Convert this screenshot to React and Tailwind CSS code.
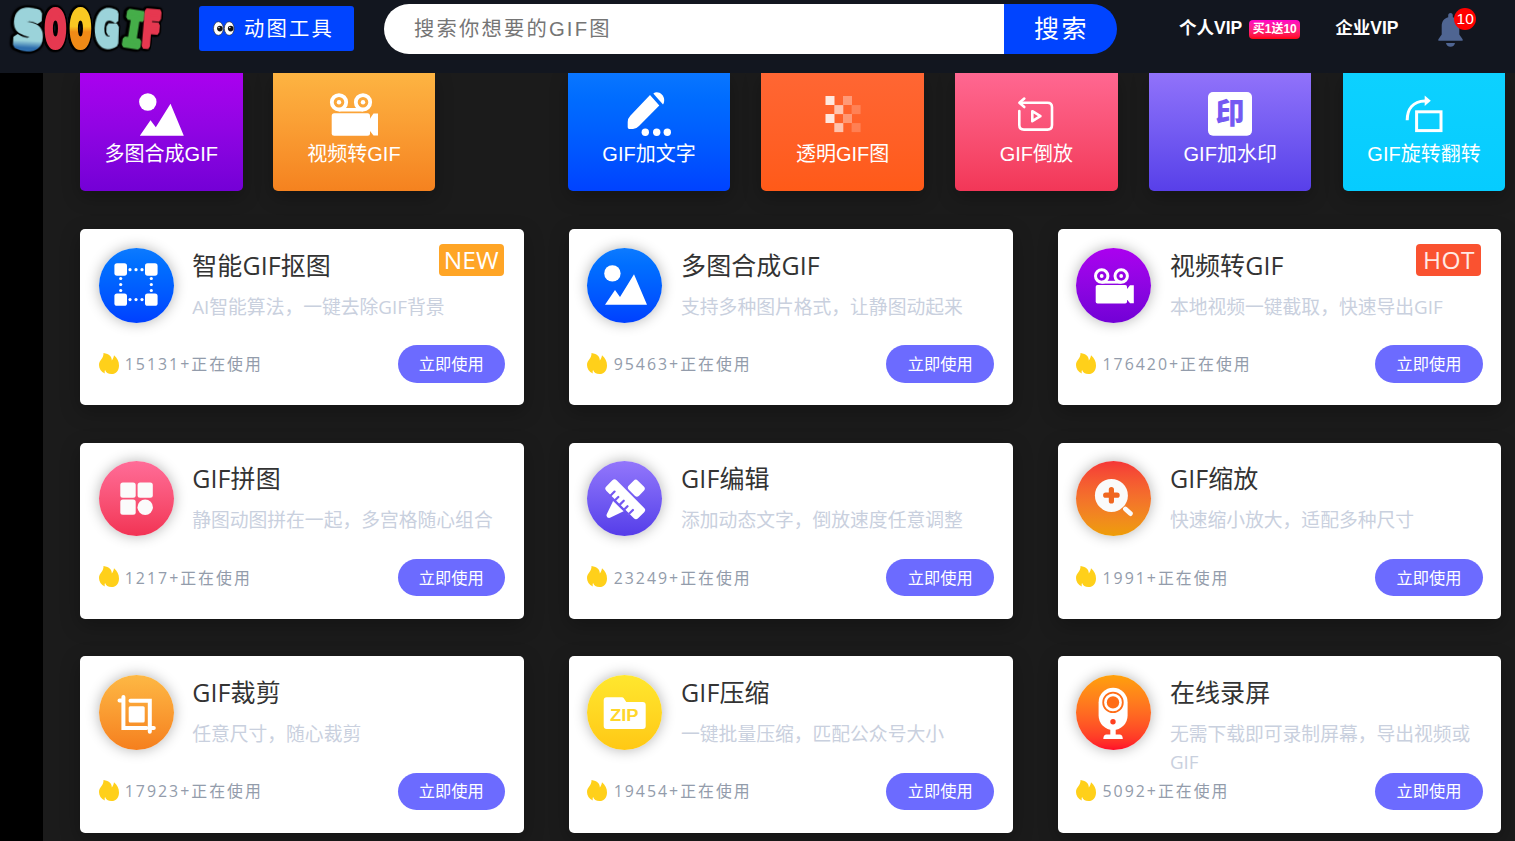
import { useState } from "react";

/* ---------- header pieces ---------- */

function Logo() {
  const common = {
    fontSize: 40,
    strokeWidth: 4.5,
    strokeLinejoin: "bevel",
    fontWeight: 700,
    textAnchor: "middle",
    fontFamily: '"DejaVu Sans", sans-serif',
    className: "drop-shadow-[0_0_1px_#000]",
  };
  return (
    <svg
      width="156"
      height="60"
      viewBox="0 0 156 60"
      className="shrink-0 overflow-visible [filter:drop-shadow(1.5px_0_0_#000)_drop-shadow(-1.5px_0_0_#000)_drop-shadow(0_1.5px_0_#000)_drop-shadow(0_-1px_0_#000)]"
    >
      <defs>
        <linearGradient id="ice" x1="0" y1="0" x2="0" y2="1">
          <stop offset="0.68" stopColor="#9bd3da" />
          <stop offset="0.8" stopColor="#2f6fae" />
        </linearGradient>
        <linearGradient id="sun" x1="0" y1="0" x2="0" y2="1">
          <stop offset="0.45" stopColor="#f9c822" />
          <stop offset="0.55" stopColor="#f08a16" />
        </linearGradient>
      </defs>
      <text {...common} transform="translate(17.5 47.5) rotate(3) scale(1.04 1.25)" fill="url(#ice)" stroke="url(#ice)" strokeWidth="5.5">S</text>
      <text {...common} transform="translate(45.5 45.5) scale(.6 1.18)" fill="#e63850" stroke="#e63850" strokeWidth="6">O</text>
      <text {...common} transform="translate(70.5 45.5) scale(.6 1.18)" fill="url(#sun)" stroke="url(#sun)" strokeWidth="6">O</text>
      <text {...common} transform="translate(96.5 45.5) rotate(2) scale(.72 1.16)" fill="#9bd3da" stroke="#9bd3da" strokeWidth="5.5">G</text>
      <text {...common} transform="translate(121 46) rotate(9) scale(.86 1.16)" fill="#45ad49" stroke="#45ad49" fontFamily='"DejaVu Sans Mono", monospace'>I</text>
      <text {...common} transform="translate(140 46.5) rotate(5) scale(.68 1.18)" fill="#e63850" stroke="#e63850">F</text>
    </svg>
  );
}

function Eyes() {
  return (
    <svg width="22" height="15" viewBox="0 0 22 15">
      <ellipse cx="5.4" cy="7.5" rx="4.9" ry="6.8" fill="#fff" stroke="#333" strokeWidth=".7" />
      <ellipse cx="16.2" cy="7.5" rx="4.9" ry="6.8" fill="#fff" stroke="#333" strokeWidth=".7" />
      <circle cx="6.9" cy="7.6" r="2.8" fill="#111" />
      <circle cx="17.7" cy="7.6" r="2.8" fill="#111" />
      <circle cx="6" cy="6.5" r=".7" fill="#fff" />
      <circle cx="16.8" cy="6.5" r=".7" fill="#fff" />
    </svg>
  );
}

function Bell() {
  return (
    <svg width="25" height="34" viewBox="0 0 25 34" fill="#4f6592">
      <path d="M12.5 0C14 0 14.8 1 14.8 2.3V4.2C18.9 5.2 21.3 8.6 21.3 13V21.5L24.6 26.2C25 27.2 24.6 27.7 23.8 27.7H1.2C.4 27.7 0 27.2.4 26.2L3.7 21.5V13C3.7 8.6 6.1 5.2 10.2 4.2V2.3C10.2 1 11 0 12.5 0Z" />
      <path d="M8 30H17C16.7 32.3 15 33.8 12.5 33.8S8.3 32.3 8 30Z" />
    </svg>
  );
}

/* ---------- tile icons, 60 x 48 ---------- */

const tileIcons = {
  picture: (
    <g fill="#fff">
      <circle cx="16.8" cy="12" r="8.7" />
      <path d="M8.8 45.7L19.5 30.3L24.8 37.3L39.5 13.7L52.8 45.7Z" />
    </g>
  ),
  camera: (
    <g fill="#fff">
      <circle cx="15" cy="12.3" r="7.2" fill="none" stroke="#fff" strokeWidth="3.8" />
      <circle cx="39" cy="12.3" r="7.2" fill="none" stroke="#fff" strokeWidth="3.8" />
      <circle cx="15" cy="12.3" r="2.2" />
      <circle cx="39" cy="12.3" r="2.2" />
      <rect x="15" y="18" width="24" height="3.5" />
      <rect x="7.7" y="23.3" width="38.3" height="22.4" rx="2.5" />
      <path d="M46 28.5L49.5 23.5H54V45.5H49.5L46 41Z" />
    </g>
  ),
  pencil: (
    <g fill="#fff">
      <path d="M31 5L40.3 15.5L20 36Q17.5 38.8 14 39H10.2Q8.7 39 8.7 37.3V32Q8.7 28.5 11.3 25.8Z" />
      <path d="M34.3 3.5C38.5.2 45 4 45.2 10C45.2 12 44.9 13 44 14.6Z" />
      <circle cx="26.3" cy="42.3" r="3.7" />
      <circle cx="37.7" cy="42.3" r="3.7" />
      <circle cx="48.3" cy="42.3" r="3.7" />
    </g>
  ),
  pixels: (
    <g fill="#fff">
      {[6, 24].map((y) => (
        <g key={y}>
          <rect x="12.5" y={y} width="9" height="9" opacity=".85" />
          <rect x="21.3" y={y + 9.1} width="9" height="9" opacity=".62" />
          <rect x="30" y={y} width="9" height="9" opacity=".35" />
          <rect x="38.6" y={y + 9.1} width="9" height="9" opacity=".2" />
        </g>
      ))}
    </g>
  ),
  reverse: (
    <g fill="none" stroke="#fff" strokeWidth="2.6" strokeLinecap="round" strokeLinejoin="round">
      <path d="M14.3 12.8H41.5Q46 12.8 46 17.3V35Q46 39.6 41.5 39.6H18Q13.3 39.6 13.3 35V21" />
      <path d="M18.3 8.6L13.4 12.8L18.3 17" />
      <path d="M26.3 21.2L34.4 26.2L26.3 31.2Z" />
    </g>
  ),
  stamp: (
    <g>
      <rect x="8" y="2" width="44" height="43.8" rx="5" fill="#fff" />
      <text x="30" y="34" textAnchor="middle" fontSize="29" fontWeight="900" fill="#7459f2" fontFamily='"Noto Sans CJK SC", sans-serif'>印</text>
    </g>
  ),
  rotate: (
    <g fill="none" stroke="#fff" strokeWidth="3">
      <rect x="22.6" y="21.8" width="24.4" height="18.8" />
      <path d="M13.2 30.3C13.2 19.5 18.5 11.2 31 10.9" />
      <path d="M30.7 5.5L36.8 10.7L30.7 16Z" fill="#fff" stroke="none" />
    </g>
  ),
};

const tiles = [
  { name: "多图合成GIF", icon: "picture", bg: "from-[#aa00ef] to-[#7400d6]", gap: "ml-0" },
  { name: "视频转GIF", icon: "camera", bg: "from-[#fdb442] to-[#f5821f]", gap: "ml-[30.2px]" },
  { name: "GIF加文字", icon: "pencil", bg: "from-[#0a76ff] to-[#0042ff]", gap: "ml-[132.6px]" },
  { name: "透明GIF图", icon: "pixels", bg: "from-[#ff6633] to-[#ff5a18]", gap: "ml-[31.1px]" },
  { name: "GIF倒放", icon: "reverse", bg: "from-[#ff6791] to-[#f23657]", gap: "ml-[31.3px]" },
  { name: "GIF加水印", icon: "stamp", bg: "from-[#9172fa] to-[#583fe9]", gap: "ml-[31.3px]" },
  { name: "GIF旋转翻转", icon: "rotate", bg: "from-[#0dd1ff] to-[#06ccff]", gap: "ml-[31.3px]" },
];

/* ---------- card icons, 75 x 75 ---------- */

const cardIcons = {
  cutout: (
    <g fill="#fff">
      {[15.4, 46].map((x) => [15.3, 45.4].map((y) => <rect key={x + "-" + y} x={x} y={y} width="12.6" height="12.4" rx="2.6" />))}
      {[31, 37, 43].map((p) => (
        <g key={p}>
          <circle cx={p} cy="21.7" r="1.6" />
          <circle cx={p} cy="51.6" r="1.6" />
          <circle cx="21.7" cy={p - 0.5} r="1.6" />
          <circle cx="52.3" cy={p - 0.5} r="1.6" />
        </g>
      ))}
    </g>
  ),
  picture: (
    <g fill="#fff">
      <circle cx="25.4" cy="25.4" r="8.2" />
      <path d="M18 56.8L28 42L33 49L47 26.3L60 56.8Z" />
    </g>
  ),
  camera: (
    <g fill="#fff">
      <circle cx="25.7" cy="28" r="6.2" fill="none" stroke="#fff" strokeWidth="3" />
      <circle cx="45.2" cy="28" r="6.2" fill="none" stroke="#fff" strokeWidth="3" />
      <circle cx="25.7" cy="28" r="1.9" />
      <circle cx="45.2" cy="28" r="1.9" />
      <rect x="25.7" y="32.8" width="19.5" height="2.8" />
      <rect x="19.7" y="37" width="31.3" height="18.5" rx="1.8" />
      <path d="M51 41L54 37.2H57.8V55.3H54L51 51.5Z" />
    </g>
  ),
  collage: (
    <g fill="#fbfbfb">
      <rect x="21.3" y="21.6" width="15.4" height="15.2" rx="2.5" />
      <rect x="38.6" y="21.6" width="15.2" height="15.2" rx="2.5" />
      <rect x="21.3" y="38.6" width="15.4" height="15.2" rx="2.5" />
      <circle cx="46.2" cy="46.2" r="7.7" />
    </g>
  ),
  tools: (
    <g transform="translate(38.3 38.2) rotate(45)">
      <rect x="-7.2" y="-22" width="14.4" height="12.8" rx="3" fill="#fff" />
      <rect x="-22.5" y="-7.2" width="45" height="14.6" rx="3" fill="#fff" />
      <path d="M-13 8.4V2.2M-6.5 8.4V3.4M0 8.4V2.2M6.5 8.4V3.4M13 8.4V2.2" stroke="#7457f2" strokeWidth="2.2" strokeLinecap="round" />
      <path d="M-7.4 9.8H7.4L2.4 24Q0 27.4 -2.4 24Z" fill="#fff" />
    </g>
  ),
  zoom: (
    <g>
      <circle cx="35.4" cy="34.4" r="16.5" fill="#fafafa" />
      <path d="M29.7 34.2H41.1M35.4 28.5V39.9" stroke="#f0661f" strokeWidth="5.2" strokeLinecap="round" />
      <path d="M49.4 48L54.4 52.6" stroke="#fafafa" strokeWidth="4.8" strokeLinecap="round" />
    </g>
  ),
  crop: (
    <g fill="none" stroke="#fff" strokeWidth="4" strokeLinecap="round">
      <path d="M20.5 25.5H24.4M24.4 22V53H47.5" />
      <path d="M31.5 25.7H50.8V56.8M51 53H54.8" />
      <rect x="29.7" y="31.3" width="16" height="16.3" rx="1.5" fill="#fff" stroke="none" />
    </g>
  ),
  zip: (
    <g>
      <path d="M19.7 22.2H35Q36 22.2 36.6 23L39.3 27H55.7Q58.7 27 58.7 30V51Q58.7 54 55.7 54H19.7Q16.7 54 16.7 51V25.2Q16.7 22.2 19.7 22.2Z" fill="#fff" />
      <text x="23" y="45.7" fontSize="16" fontWeight="700" textLength="28.5" lengthAdjust="spacingAndGlyphs" fill="#ffd62a" fontFamily='"Liberation Sans", sans-serif'>ZIP</text>
    </g>
  ),
  record: (
    <g>
      <rect x="22.6" y="12.7" width="29" height="42.2" rx="14.5" fill="#fff" />
      <circle cx="37" cy="27.4" r="9.8" fill="none" stroke="#ff6d17" strokeWidth="1.8" />
      <circle cx="37" cy="27.4" r="6.2" fill="#ff6d17" />
      <circle cx="37" cy="46.7" r="2.7" fill="#ff3f20" />
      <path d="M34.3 54H39.7V59.6H44Q46.7 60 46.8 64H27.3Q27.4 60 30 59.6H34.3Z" fill="#fff" />
    </g>
  ),
};

const cards = [
  { title: "智能GIF抠图", desc: "AI智能算法，一键去除GIF背景", count: "15131", icon: "cutout", bg: "from-[#0d7aff] to-[#003fff]", tag: "NEW" },
  { title: "多图合成GIF", desc: "支持多种图片格式，让静图动起来", count: "95463", icon: "picture", bg: "from-[#0d7aff] to-[#003fff]" },
  { title: "视频转GIF", desc: "本地视频一键截取，快速导出GIF", count: "176420", icon: "camera", bg: "from-[#ab00ef] to-[#7200d6]", tag: "HOT" },
  { title: "GIF拼图", desc: "静图动图拼在一起，多宫格随心组合", count: "1217", icon: "collage", bg: "from-[#ff6c98] to-[#f23254]" },
  { title: "GIF编辑", desc: "添加动态文字，倒放速度任意调整", count: "23249", icon: "tools", bg: "from-[#9376fb] to-[#563ce9]" },
  { title: "GIF缩放", desc: "快速缩小放大，适配多种尺寸", count: "1991", icon: "zoom", bg: "from-[#f53637] to-[#ee9d05]" },
  { title: "GIF裁剪", desc: "任意尺寸，随心裁剪", count: "17923", icon: "crop", bg: "from-[#fdb844] to-[#f57f1d]" },
  { title: "GIF压缩", desc: "一键批量压缩，匹配公众号大小", count: "19454", icon: "zip", bg: "from-[#ffe72e] to-[#ffc814]" },
  { title: "在线录屏", desc: "无需下载即可录制屏幕，导出视频或GIF", count: "5092", icon: "record", bg: "from-[#ffa00a] to-[#ff0729]" },
];

function Flame() {
  return (
    <svg width="20" height="21" viewBox="0 0 20 21" fill="#ffd01a" className="mb-[2px] shrink-0">
      <path d="M4.5 0C10.5 .8 13 4 12.8 7.6C13.8 6 14.6 4.6 15 2.2C18.4 4.8 20 8.6 20 12.4C20 17.6 17 21 12.5 21C9 21 7 19.6 6.1 17C5.6 18.2 5.5 19 5.9 20.4C2 18.8 0 15.6 0 12C0 7.2 4.9 5.4 4.5 0Z" />
    </svg>
  );
}

function Card({ item }) {
  return (
    <div className="relative h-[176.3px] rounded-[5px] bg-white pl-[18.6px] pr-[18.6px] shadow-[0_6px_20px_rgba(0,0,0,0.28)]">
      <div className="flex h-[116.3px] pt-[18.7px]">
        <div className={"h-[75px] w-[75px] shrink-0 rounded-full bg-linear-to-b shadow-[0_0_14px_rgba(0,0,0,0.3)] " + item.bg}>
          <svg width="75" height="75" viewBox="0 0 75 75">{cardIcons[item.icon]}</svg>
        </div>
        <div className="min-w-0 flex-1 pl-[18.6px]">
          <h3 className="text-[25px] leading-[34px] tracking-[0.1px] text-[#333]">{item.title}</h3>
          <p className="mt-[11px] text-[18.8px] leading-[28px] text-[#c9d0de]">{item.desc}</p>
        </div>
      </div>
      <div className="flex items-center justify-between">
        <div className="flex items-center gap-[6.2px]">
          <Flame />
          <span className="text-[15.9px] leading-[24px] tracking-[2px] text-[#939cab]">{item.count}+正在使用</span>
        </div>
        <button className="h-[37.5px] w-[107.5px] rounded-full bg-[#6c6bff] text-[16.25px] text-white">立即使用</button>
      </div>
      {item.tag === "NEW" ? (
        <span className="absolute right-[20px] top-[15px] flex h-[32px] w-[65px] items-center justify-center rounded-[4px] bg-[#ffa526] text-[24.5px] font-medium leading-none text-white">NEW</span>
      ) : null}
      {item.tag === "HOT" ? (
        <span className="absolute right-[20px] top-[15px] flex h-[32px] w-[65px] items-center justify-center rounded-[4px] bg-[#fa5230] text-[24.5px] leading-none tracking-[0.4px] text-[#ffe9e4]">HOT</span>
      ) : null}
    </div>
  );
}

export default function App() {
  const [keyword, setKeyword] = useState("");

  return (
    <div className="flex h-[841px] w-[1515px] flex-col overflow-hidden bg-black font-['Open_Sans','Noto_Sans_CJK_SC',sans-serif]">
      <header className="relative z-10 flex h-[73px] shrink-0 items-start bg-[#12161f] pl-[10px]">
        <Logo />
        <button className="ml-[33px] mt-[6px] flex h-[45px] w-[155px] items-center rounded-[3px] bg-[#0044ff] pl-[14px] text-[20.3px] tracking-[2.2px] text-white">
          <Eyes />
          <span className="ml-[9px] whitespace-nowrap">动图工具</span>
        </button>
        <form className="ml-[30px] mt-[4px] flex h-[50px] w-[733px] overflow-hidden rounded-full" onSubmit={(e) => e.preventDefault()}>
          <input
            type="text"
            value={keyword}
            onChange={(e) => setKeyword(e.target.value)}
            placeholder="搜索你想要的GIF图"
            className="w-[620px] bg-white pl-[30px] font-['Liberation_Sans','Noto_Sans_CJK_SC',sans-serif] text-[20.3px] tracking-[2.2px] placeholder:text-[#757575] focus:outline-none"
          />
          <button className="flex-1 bg-[#0044ff] pl-[2px] text-[25px] tracking-[2.5px] text-white">搜索</button>
        </form>
        <div className="mt-[14px] flex h-[28px] items-center whitespace-nowrap font-['Liberation_Sans','Noto_Sans_CJK_SC',sans-serif] text-[17.5px] font-bold text-white">
          <span className="ml-[62px]">个人VIP</span>
          <span className="ml-[7px] mt-[2px] flex h-[19px] w-[51px] items-center justify-center rounded-[4px] bg-linear-to-b from-[#ff00c8] to-[#ff0000] text-[12px]">买1送10</span>
          <span className="ml-[35px]">企业VIP</span>
        </div>
        <div className="relative ml-[39.8px] mt-[13px]">
          <Bell />
          <span className="absolute left-[16px] top-[-5px] flex h-[22px] w-[22px] items-center justify-center rounded-full bg-[#ff0000] font-['Liberation_Sans',sans-serif] text-[15.5px] leading-none text-white">10</span>
        </div>
      </header>

      <main className="ml-[43px] flex-1 bg-[#1b1b1b] pl-[37px]">
        <div className="flex">
          {tiles.map((tile) => (
            <div
              key={tile.name}
              className={"flex h-[118px] w-[162.5px] shrink-0 flex-col items-center rounded-b-[5px] bg-linear-to-b pt-[17px] shadow-[0_6px_18px_rgba(0,0,0,0.25)] " + tile.bg + " " + tile.gap}
            >
              <svg width="60" height="48" viewBox="0 0 60 48" className="shrink-0">{tileIcons[tile.icon]}</svg>
              <span className="mt-[2px] whitespace-nowrap font-['Liberation_Sans','Noto_Sans_CJK_SC',sans-serif] text-[20px] leading-[28px] text-white">{tile.name}</span>
            </div>
          ))}
        </div>

        <div className="mt-[38px] grid w-[1421.4px] grid-cols-3 gap-x-[45.2px] gap-y-[37.4px]">
          {cards.map((item) => (
            <Card key={item.title} item={item} />
          ))}
        </div>
      </main>
    </div>
  );
}
